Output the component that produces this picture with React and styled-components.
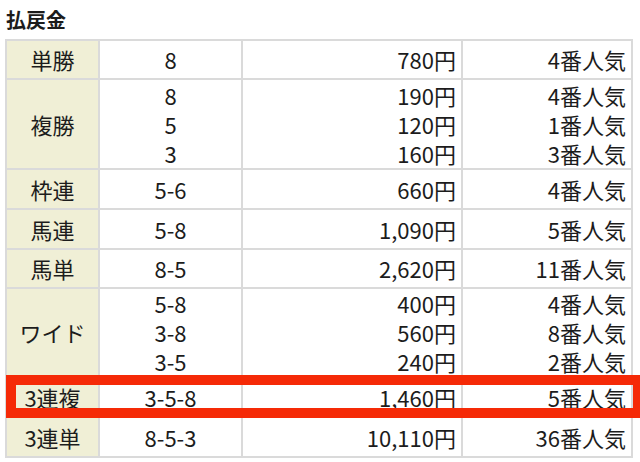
import React from "react";
import styled, { createGlobalStyle } from "styled-components";

const GlobalStyle = createGlobalStyle`
  html, body {
    margin: 0;
    padding: 0;
    background: #fff;
    overflow: hidden;
  }
  body {
    font-family: "Noto Sans CJK JP", "Noto Sans", sans-serif;
    color: #1c1c1c;
  }
`;

const Page = styled.div`
  position: relative;
  width: 640px;
  height: 462px;
  padding: 6px 0 0 5px;
  box-sizing: border-box;
`;

const Title = styled.h2`
  margin: 0 0 5px 1px;
  font-size: 20px;
  line-height: 28px;
  font-weight: 700;
`;

const PayTable = styled.div`
  width: 628px;
  border-top: 2px solid #dadada;
  border-left: 2px solid #dadada;
  box-sizing: border-box;
  font-size: 22px;
`;

const Row = styled.div`
  display: grid;
  grid-template-columns: 93px 143px 220px 170px;
  height: ${({ h }) => h}px;
`;

const Cell = styled.div`
  display: flex;
  flex-direction: column;
  justify-content: center;
  align-items: ${({ align }) => (align === "right" ? "flex-end" : "center")};
  padding-right: ${({ align }) => (align === "right" ? "5px" : "0")};
  border-right: 2px solid #dadada;
  border-bottom: 2px solid #dadada;
  background: ${({ head }) => (head ? "#f0efd6" : "#fff")};
  box-sizing: border-box;
`;

const Line = styled.div`
  line-height: 29px;
  white-space: nowrap;
`;

// red annotation frame drawn over the 3連複 row
const Highlight = styled.div`
  position: absolute;
  left: 6px;
  top: 375px;
  width: 637px;
  height: 43px;
  border: 10px solid #f52a07;
  box-sizing: border-box;
  pointer-events: none;
`;

const rows = [
  { name: "単勝", h: 39, items: [["8", "780円", "4番人気"]] },
  {
    name: "複勝",
    h: 90,
    items: [
      ["8", "190円", "4番人気"],
      ["5", "120円", "1番人気"],
      ["3", "160円", "3番人気"],
    ],
  },
  { name: "枠連", h: 40, items: [["5-6", "660円", "4番人気"]] },
  { name: "馬連", h: 40, items: [["5-8", "1,090円", "5番人気"]] },
  { name: "馬単", h: 39, items: [["8-5", "2,620円", "11番人気"]] },
  {
    name: "ワイド",
    h: 89,
    items: [
      ["5-8", "400円", "4番人気"],
      ["3-8", "560円", "8番人気"],
      ["3-5", "240円", "2番人気"],
    ],
  },
  { name: "3連複", h: 40, items: [["3-5-8", "1,460円", "5番人気"]] },
  { name: "3連単", h: 40, items: [["8-5-3", "10,110円", "36番人気"]] },
];

const App = () => {
  return (
    <Page>
      <GlobalStyle />
      <Title>払戻金</Title>
      <PayTable>
        {rows.map((row) => (
          <Row key={row.name} h={row.h}>
            <Cell head>
              <Line>{row.name}</Line>
            </Cell>
            <Cell>
              {row.items.map((it, i) => (
                <Line key={i}>{it[0]}</Line>
              ))}
            </Cell>
            <Cell align="right">
              {row.items.map((it, i) => (
                <Line key={i}>{it[1]}</Line>
              ))}
            </Cell>
            <Cell align="right">
              {row.items.map((it, i) => (
                <Line key={i}>{it[2]}</Line>
              ))}
            </Cell>
          </Row>
        ))}
      </PayTable>
      <Highlight />
    </Page>
  );
};

export default App;
